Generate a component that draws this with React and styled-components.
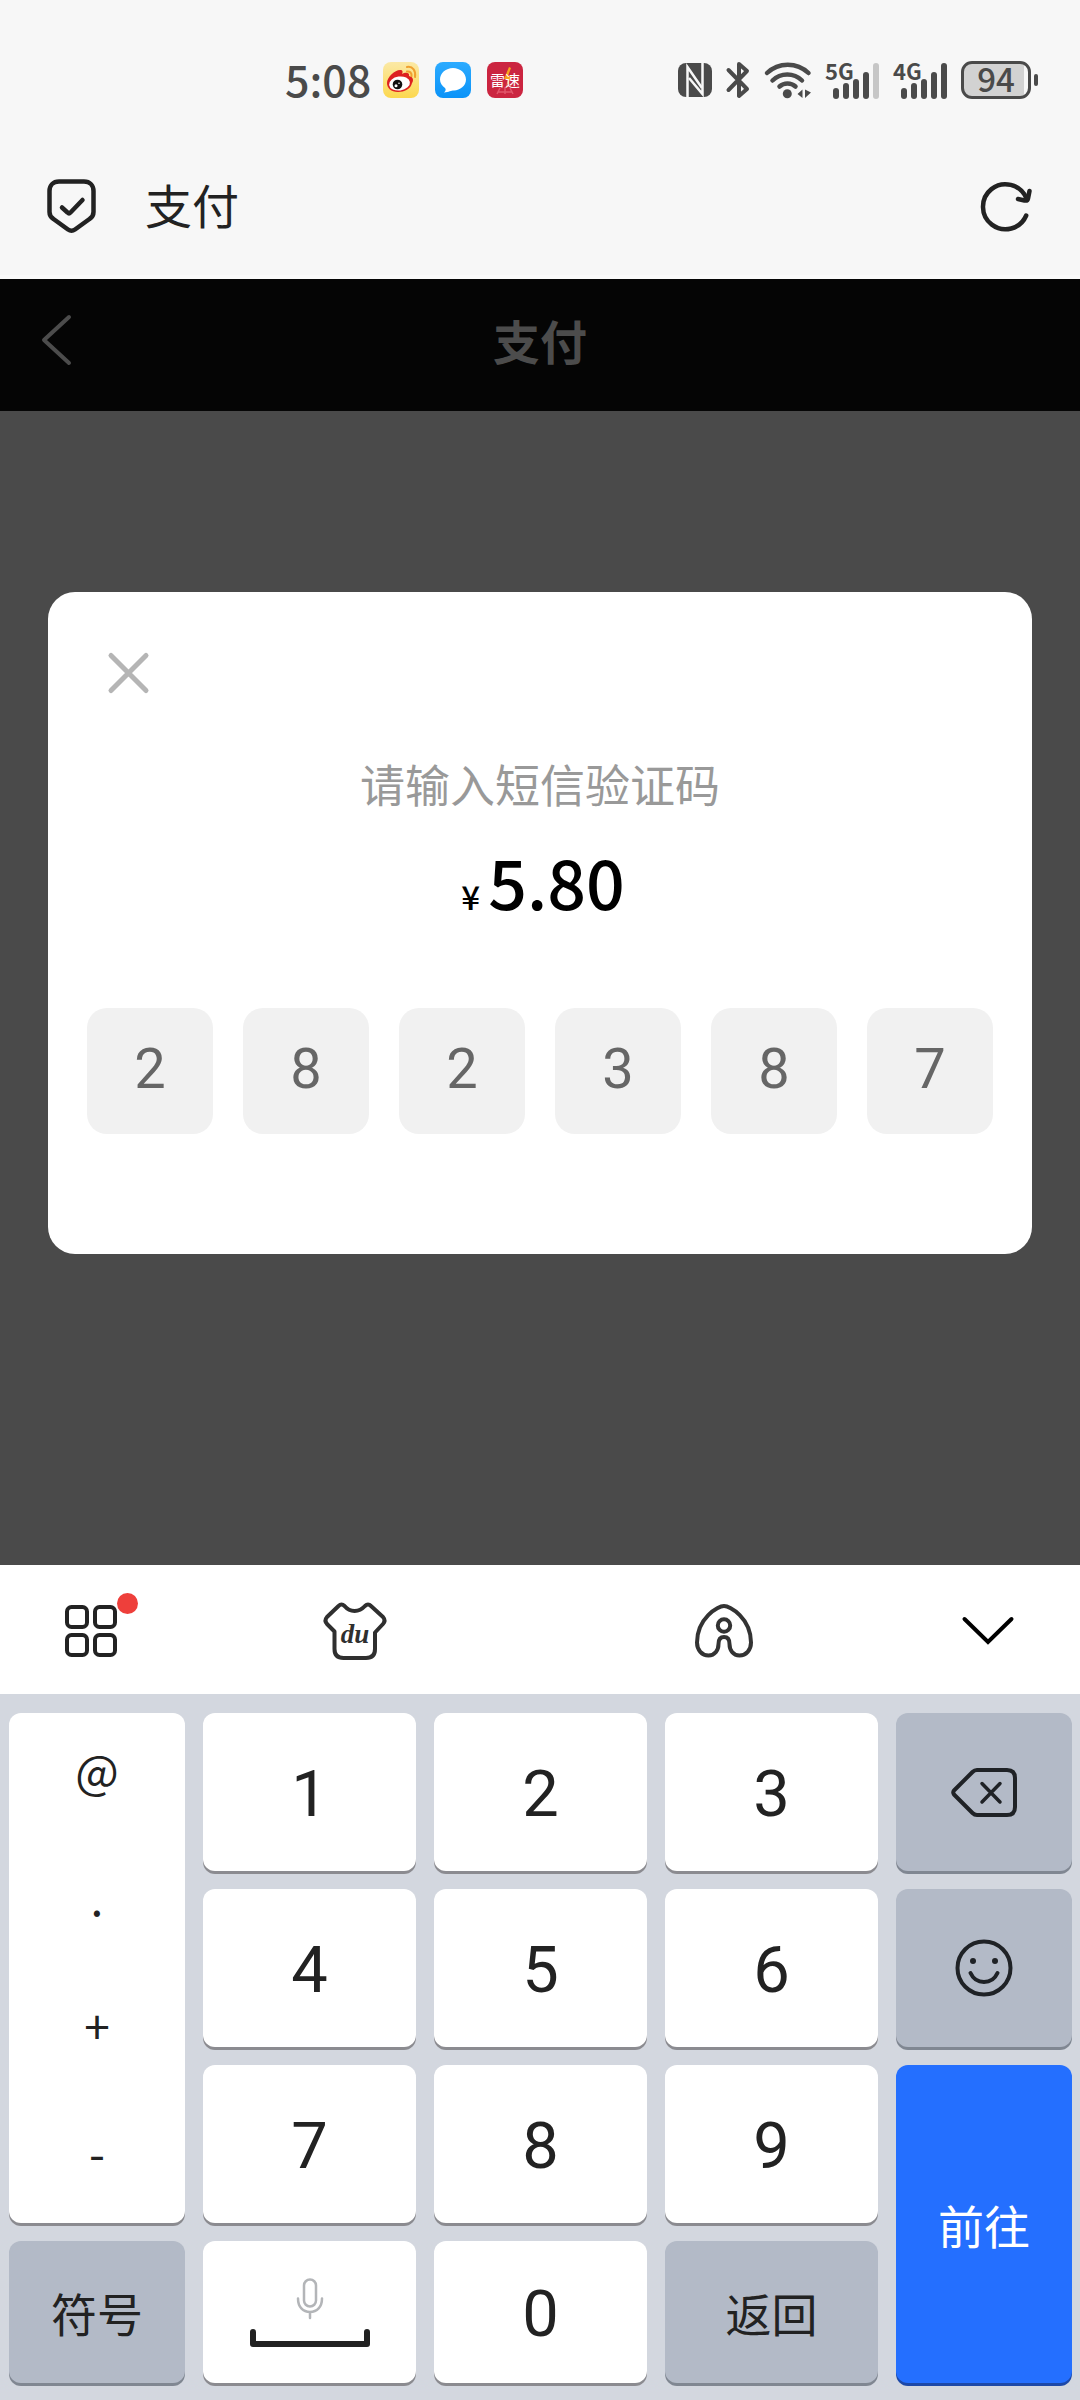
import React from "react"
import styled, { createGlobalStyle, css } from "styled-components"

const GlobalStyle = createGlobalStyle`
  * {
    box-sizing: border-box;
  }

  body {
    margin: 0;
    background: #4a4a4a;
    font-family: "Noto Sans CJK SC", "Noto Sans", sans-serif;
  }

  button {
    padding: 0;
    border: 0;
    background: none;
    color: inherit;
    font: inherit;
    cursor: pointer;
  }

  svg {
    display: block;
    flex: none;
    overflow: visible;
  }
`

const Page = styled.div`
  display: flex;
  flex-direction: column;
  min-height: 100vh;
`

const StatusBar = styled.div`
  display: flex;
  align-items: center;
  justify-content: space-between;
  height: 134px;
  padding: 26px 42px 0 285px;
  background: #f7f7f7;
  color: #4a4a4a;
`

const StatusGroup = styled.div`
  display: flex;
  align-items: center;
  gap: ${props => props.$gap}px;
`

const Clock = styled.span`
  margin-right: -4px;
  padding-bottom: 4px;
  font-size: 43px;
  font-weight: 500;
  line-height: 60px;
`

const Battery = styled.div`
  display: flex;
  align-items: center;
  gap: 3px;

  &::after {
    content: "";
    width: 4px;
    height: 12px;
    border-radius: 2px;
    background: #4a4a4a;
  }
`

const BatteryLevel = styled.span`
  width: 70px;
  height: 38px;
  border: 3px solid #4a4a4a;
  border-radius: 11px;
  background: linear-gradient(to right, #d2d2d2 94%, #f7f7f7 94%);
  font-size: 33px;
  font-weight: 500;
  line-height: 28px;
  text-align: center;
`

const BrowserBar = styled.header`
  display: flex;
  align-items: center;
  height: 145px;
  padding: 4px 49px 0 47px;
  border-bottom: 4px solid #fafafa;
  background: #f7f7f7;
  color: #222;
`

const SiteName = styled.span`
  flex: 1;
  margin-left: 48px;
  padding-bottom: 6px;
  font-size: 47px;
  line-height: 70px;
`

const PageHeader = styled.div`
  display: grid;
  grid-template-columns: 80px 1fr 80px;
  align-items: center;
  height: 132px;
  padding: 0 40px 10px;
  background: #050505;
  color: #4c4c4c;
`

const PageTitle = styled.h1`
  margin: 0;
  font-size: 47px;
  font-weight: 700;
  line-height: 70px;
  text-align: center;
`

const Backdrop = styled.main`
  flex: 1;
  padding: 181px 48px 0;
  background: #4a4a4a;
`

const Dialog = styled.section`
  display: flex;
  flex-direction: column;
  padding: 60px 39px 120px;
  border-radius: 27px;
  background: #fff;
`

const CloseButton = styled.button`
  align-self: flex-start;
  margin-left: 21px;
`

const Prompt = styled.h2`
  margin: 55px 0 0;
  color: #999;
  font-size: 45px;
  font-weight: 400;
  line-height: 70px;
  text-align: center;
`

const Amount = styled.p`
  display: flex;
  align-items: baseline;
  justify-content: center;
  gap: 8px;
  margin: 9px 0 59px;
  padding-left: 6px;
  color: #000;
  font-size: 68px;
  font-weight: 500;
  line-height: 106px;
`

const Currency = styled.span`
  font-size: 33px;
`

const CodeRow = styled.div`
  display: grid;
  grid-template-columns: repeat(6, 1fr);
  gap: 30px;
`

const CodeBox = styled.input`
  width: 100%;
  min-width: 0;
  aspect-ratio: 1;
  padding: 0 0 4px;
  border: 0;
  border-radius: 20px;
  background: #f1f1f1;
  color: #666;
  font-family: Roboto, sans-serif;
  font-size: 56px;
  text-align: center;
`

const Keyboard = styled.div`
  background: #d3d7df;
  color: #222;
`

const Toolbar = styled.div`
  display: flex;
  justify-content: space-between;
  height: 129px;
  padding: 3px 60px 0 59px;
  background: #fff;
`

const ToolGroup = styled.div`
  display: flex;
  align-items: center;
  gap: 200px;
`

const ToolButton = styled.button`
  position: relative;
  display: flex;
  align-items: center;
  justify-content: center;
  width: 64px;
  height: 64px;
`

const Badge = styled.span`
  position: absolute;
  top: -6px;
  right: -15px;
  width: 21px;
  height: 21px;
  border-radius: 50%;
  background: #ee3f3b;
`

const Keys = styled.div`
  display: grid;
  grid-template-columns: 176fr 213fr 213fr 213fr 176fr;
  grid-template-rows: repeat(3, 158px) 142px;
  gap: 18px;
  padding: 19px 8px 17px 9px;
`

const keyTones = {
  light: css`
    background: #fff;
    box-shadow: 0 3px 0 #8b8b90;
  `,
  grey: css`
    background: #b3bac7;
    box-shadow: 0 3px 0 #808792;
  `,
  blue: css`
    background: #246fff;
    color: #fff;
    box-shadow: 0 3px 0 #1c48a8;
  `,
}

const Key = styled.button`
  display: flex;
  flex-direction: column;
  align-items: center;
  justify-content: center;
  gap: 10px;
  grid-row: span ${props => props.$rows || 1};
  border-radius: 12px;
  font-size: 46px;
  line-height: 68px;
  ${props => keyTones[props.$tone || "light"]}
`

const DigitKey = styled(Key)`
  padding-top: 4px;
  font-family: Roboto, sans-serif;
  font-size: 65px;
`

const SymbolColumn = styled.div`
  display: flex;
  flex-direction: column;
  grid-row: span 3;
  border-radius: 12px;
  ${keyTones.light}
`

const SymbolKey = styled.button`
  flex: 1;
  padding-bottom: 16px;
  font-size: 46px;
  line-height: 64px;
`

const WeiboIcon = () => (
  <svg width="36" height="36" viewBox="0 0 36 36">
    <defs>
      <linearGradient id="weibo" x1="0" y1="0" x2="0" y2="1">
        <stop offset="0" stopColor="#fbe9a6" />
        <stop offset="1" stopColor="#fcd84f" />
      </linearGradient>
    </defs>
    <rect width="36" height="36" rx="8" fill="url(#weibo)" />
    <path
      d="M4 21C4 15 12 8 17 8c3 0 3 2 2 4 3-2 8-2 7 2 4 1 5 4 3 7C28 27 21 30 15 30 8 30 4 26 4 21Z"
      fill="#dd2020"
    />
    <ellipse cx="16.500" cy="21.500" rx="10.500" ry="7" fill="#fff" transform="rotate(-8 16.500 21.500)" />
    <circle cx="14.500" cy="22.500" r="4.800" fill="#111" />
    <circle cx="13" cy="23.800" r="1.500" fill="#fff" />
    <circle cx="16" cy="21.200" r="0.800" fill="#fff" />
    <path d="M24 5C30 4 33 9 32 15M24 9.500C27 9 29 11 28.500 14" fill="none" stroke="#f0a030" strokeWidth="2" strokeLinecap="round" />
  </svg>
)

const MessageIcon = () => (
  <svg width="36" height="36" viewBox="0 0 36 36">
    <defs>
      <linearGradient id="message" x1="0" y1="0" x2="0" y2="1">
        <stop offset="0" stopColor="#2cabff" />
        <stop offset="1" stopColor="#0b93f8" />
      </linearGradient>
    </defs>
    <rect width="36" height="36" rx="8" fill="url(#message)" />
    <path d="M18 6C25 6 31 11 31 17.500S25 28 19 28.500C16 28.500 14 30 9 30.500 11 29 11 27 10 26 7 24 5 21 5 17.500 5 11 11 6 18 6Z" fill="#fff" />
  </svg>
)

const LeisuIcon = () => (
  <svg width="36" height="36" viewBox="0 0 36 36">
    <rect width="36" height="36" rx="8" fill="#cb2540" />
    <path d="M13 26L10 32M18 25V32M23 26L26 32M11 30H25" stroke="#e2566a" strokeWidth="1.500" />
    <path d="M22 5L17 17H21L19 25L25 14H21L24 6Z" fill="#f8a51c" />
    <text x="18" y="24" textAnchor="middle" fontSize="15" fill="#fff">雷速</text>
  </svg>
)

const NfcIcon = () => (
  <svg width="34" height="34" viewBox="0 0 34 34">
    <rect width="34" height="34" rx="8" fill="#4a4a4a" />
    <path d="M9.500 34V4L24 25" fill="none" stroke="#f7f7f7" strokeWidth="2.500" />
    <path d="M24.500 0V31L11 15" fill="none" stroke="#f7f7f7" strokeWidth="2.500" />
  </svg>
)

const BluetoothIcon = () => (
  <svg width="24" height="38" viewBox="0 0 24 38">
    <path
      d="M2.500 9L21 28 13 35V3L21 10 2.500 29"
      fill="none"
      stroke="#4a4a4a"
      strokeWidth="4"
      strokeLinecap="round"
      strokeLinejoin="round"
    />
  </svg>
)

const WifiIcon = () => (
  <svg width="47" height="38" viewBox="0 0 47 38">
    <g fill="none" stroke="#4a4a4a" strokeWidth="4.500" strokeLinecap="round">
      <path d="M3 12A30 30 0 0 1 44.500 12" />
      <path d="M8.500 19.500A21 21 0 0 1 38 19.500" />
      <path d="M15.500 25.500A12 12 0 0 1 31.500 25.500" />
    </g>
    <circle cx="23.300" cy="32.800" r="4.500" fill="#4a4a4a" />
    <path d="M33.500 33L38.500 28.500V37ZM41 28.500L47 31.500 41 37Z" fill="#4a4a4a" />
  </svg>
)

const barTops = [26, 21, 17, 10, 1]

const SignalIcon = ({ network, level }) => (
  <svg width="54" height="37" viewBox="0 0 54 37">
    {barTops.map((top, i) => (
      <rect
        key={top}
        x={8 + i * 10}
        y={top}
        width="6"
        height={37 - top}
        rx="3"
        fill={i < level ? "#4a4a4a" : "#c6c6c6"}
      />
    ))}
    <text x="0" y="18" fontSize="22" fontWeight="700" fontFamily="Noto Sans CJK SC, sans-serif" fill="#4a4a4a">
      {network}
    </text>
  </svg>
)

const ShieldIcon = () => (
  <svg width="50" height="55" viewBox="0 0 50 55" fill="none" stroke="#222" strokeLinecap="round" strokeLinejoin="round">
    <path
      d="M12 2.500H37C43 2.500 46.500 6.500 46.500 12V33C46.500 36 45 38.500 42.500 40L28 50.500C26 52 23 52 21 50.500L6.500 40C4 38.500 2.500 36 2.500 33V12C2.500 6.500 6 2.500 12 2.500Z"
      strokeWidth="4.500"
    />
    <path d="M15 28.500L20.500 33.500Q22 35 23.500 33.500L35.500 21" strokeWidth="4.500" />
  </svg>
)

const RefreshIcon = () => (
  <svg width="50" height="50" viewBox="0 0 50 50" fill="none" stroke="#222" strokeWidth="4.500" strokeLinecap="round" strokeLinejoin="round">
    <path d="M45.200 33.500A22.500 22.500 0 1 1 45 15.500" />
    <path d="M48.500 9L47 16.500Q46.500 19 43.500 18.500L37 17" />
  </svg>
)

const BackIcon = () => (
  <svg width="32" height="52" viewBox="0 0 32 52" fill="none" stroke="#4c4c4c" strokeWidth="4" strokeLinecap="round" strokeLinejoin="round">
    <path d="M29 3L4 26L29 49" />
  </svg>
)

const CloseIcon = () => (
  <svg width="41" height="42" viewBox="0 0 41 42" fill="none" stroke="#b5b5b5" strokeWidth="5" strokeLinecap="round">
    <path d="M3 3.500L38 38.500M38 3.500L3 38.500" />
  </svg>
)

const GridIcon = () => (
  <svg width="52" height="52" viewBox="0 0 52 52" fill="none" stroke="#222" strokeWidth="4">
    <rect x="2" y="2" width="20" height="20" rx="4.500" />
    <rect x="30" y="2" width="20" height="20" rx="4.500" />
    <rect x="2" y="30" width="20" height="20" rx="4.500" />
    <rect x="30" y="30" width="20" height="20" rx="4.500" />
  </svg>
)

const ShirtIcon = () => (
  <svg width="64" height="58" viewBox="0 0 64 58">
    <path
      d="M11.500 29.500L4 22Q1 18.500 4 15L15.500 4Q18.500 1 21.500 4C27 10.500 36 10.500 42 4Q45 1 48 4L60 15Q63 18.500 60 22L52 30.500V47Q52 56 43 56H20.500Q11.500 56 11.500 47Z"
      fill="none"
      stroke="#2f2f2f"
      strokeWidth="4"
      strokeLinejoin="round"
    />
    <text x="32" y="41" textAnchor="middle" fontSize="27" fontStyle="italic" fontWeight="700" fontFamily="Liberation Serif, serif" fill="#2f2f2f">
      du
    </text>
  </svg>
)

const AssistantIcon = () => (
  <svg width="58" height="54" viewBox="0 0 58 54" fill="none" stroke="#333" strokeWidth="4">
    <path d="M29 2C35 2 56 14 56 38.500C56 46 51 51.500 44.500 51.500C38 51.500 34.500 46 34.500 40C34.500 36 33 33 29 33C25 33 23.500 36 23.500 40C23.500 46 20 51.500 13.500 51.500C7 51.500 2 46 2 38.500C2 14 23 2 29 2Z" />
    <circle cx="29" cy="21.500" r="6.200" />
  </svg>
)

const CollapseIcon = () => (
  <svg width="52" height="30" viewBox="0 0 52 30" fill="none" stroke="#000" strokeWidth="4" strokeLinecap="round">
    <path d="M2.500 3L26 26L49.500 3" />
  </svg>
)

const DeleteIcon = () => (
  <svg width="66" height="49" viewBox="0 0 66 49" fill="none" stroke="#1f2226" strokeWidth="4" strokeLinecap="round" strokeLinejoin="round">
    <path d="M26 2H56Q64 2 64 10V39Q64 47 56 47H26Q23.500 47 21.500 45L3 26.500Q1.500 24.500 3 22.500L21.500 4Q23.500 2 26 2Z" />
    <path d="M31 15.500L49 34M49 15.500L31 34" strokeWidth="3.500" />
  </svg>
)

const SmileIcon = () => (
  <svg width="58" height="58" viewBox="0 0 58 58" fill="none" stroke="#1f2226" strokeWidth="4" strokeLinecap="round">
    <circle cx="29" cy="29" r="26.500" />
    <path d="M15.500 34C21 46 37 46 42.500 34" />
    <g fill="#1f2226" stroke="none">
      <circle cx="18" cy="22" r="3" />
      <circle cx="40" cy="22" r="3" />
    </g>
  </svg>
)

const MicIcon = () => (
  <svg width="28" height="41" viewBox="0 0 28 41" fill="none" stroke="#b3b5b8" strokeWidth="2.500" strokeLinecap="round">
    <rect x="8" y="1.500" width="12" height="27" rx="6" />
    <path d="M2 20.500C2 29 7 34 14 34S26 29 26 20.500M14 34V40" />
  </svg>
)

const SpaceIcon = () => (
  <svg width="120" height="18" viewBox="0 0 120 18" fill="none" stroke="#222" strokeWidth="6" strokeLinecap="round" strokeLinejoin="round">
    <path d="M3 3V15H117V3" />
  </svg>
)

const code = ["2", "8", "2", "3", "8", "7"]

const App = () => (
  <>
    <GlobalStyle />
    <Page>
      <StatusBar>
        <StatusGroup $gap={16}>
          <Clock>5:08</Clock>
          <WeiboIcon />
          <MessageIcon />
          <LeisuIcon />
        </StatusGroup>
        <StatusGroup $gap={14}>
          <NfcIcon />
          <BluetoothIcon />
          <WifiIcon />
          <SignalIcon network="5G" level={4} />
          <SignalIcon network="4G" level={5} />
          <Battery>
            <BatteryLevel>94</BatteryLevel>
          </Battery>
        </StatusGroup>
      </StatusBar>

      <BrowserBar>
        <ShieldIcon />
        <SiteName>支付</SiteName>
        <button type="button" aria-label="刷新">
          <RefreshIcon />
        </button>
      </BrowserBar>

      <PageHeader>
        <button type="button" aria-label="后退">
          <BackIcon />
        </button>
        <PageTitle>支付</PageTitle>
      </PageHeader>

      <Backdrop>
        <Dialog role="dialog" aria-labelledby="prompt">
          <CloseButton type="button" aria-label="关闭">
            <CloseIcon />
          </CloseButton>
          <Prompt id="prompt">请输入短信验证码</Prompt>
          <Amount>
            <Currency>¥</Currency>
            <span>5.80</span>
          </Amount>
          <CodeRow>
            {code.map((digit, i) => (
              <CodeBox
                key={i}
                inputMode="numeric"
                maxLength={1}
                defaultValue={digit}
                aria-label={`验证码第${i + 1}位`}
              />
            ))}
          </CodeRow>
        </Dialog>
      </Backdrop>

      <Keyboard>
        <Toolbar>
          <ToolGroup>
            <ToolButton type="button" aria-label="菜单">
              <GridIcon />
              <Badge />
            </ToolButton>
            <ToolButton type="button" aria-label="皮肤">
              <ShirtIcon />
            </ToolButton>
          </ToolGroup>
          <ToolGroup>
            <ToolButton type="button" aria-label="助手">
              <AssistantIcon />
            </ToolButton>
            <ToolButton type="button" aria-label="收起键盘">
              <CollapseIcon />
            </ToolButton>
          </ToolGroup>
        </Toolbar>

        <Keys>
          <SymbolColumn>
            {["@", ".", "+", "-"].map(symbol => (
              <SymbolKey key={symbol} type="button">
                {symbol}
              </SymbolKey>
            ))}
          </SymbolColumn>
          <DigitKey type="button">1</DigitKey>
          <DigitKey type="button">2</DigitKey>
          <DigitKey type="button">3</DigitKey>
          <Key type="button" $tone="grey" aria-label="删除">
            <DeleteIcon />
          </Key>

          <DigitKey type="button">4</DigitKey>
          <DigitKey type="button">5</DigitKey>
          <DigitKey type="button">6</DigitKey>
          <Key type="button" $tone="grey" aria-label="表情">
            <SmileIcon />
          </Key>

          <DigitKey type="button">7</DigitKey>
          <DigitKey type="button">8</DigitKey>
          <DigitKey type="button">9</DigitKey>
          <Key type="button" $tone="blue" $rows={2}>
            前往
          </Key>

          <Key type="button" $tone="grey">
            符号
          </Key>
          <Key type="button" aria-label="空格">
            <MicIcon />
            <SpaceIcon />
          </Key>
          <DigitKey type="button">0</DigitKey>
          <Key type="button" $tone="grey">
            返回
          </Key>
        </Keys>
      </Keyboard>
    </Page>
  </>
)

export default App
